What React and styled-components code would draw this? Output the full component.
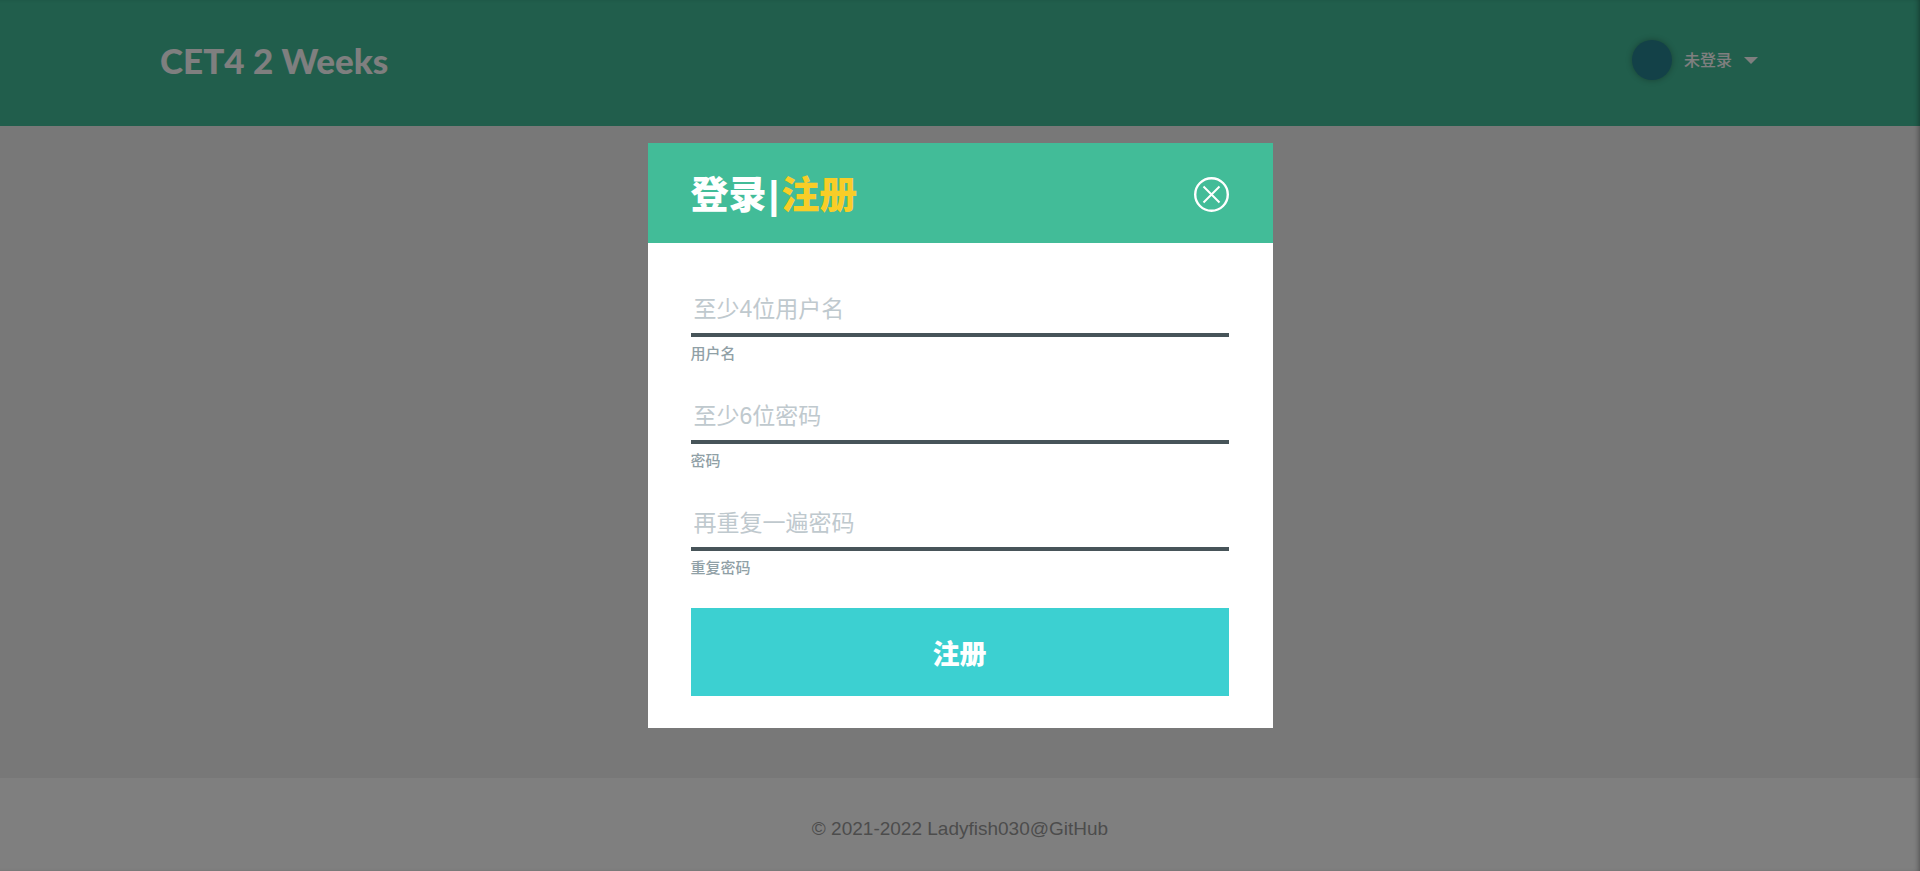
import styled, { createGlobalStyle } from 'styled-components';

const GlobalStyle = createGlobalStyle`
  *,
  *::before,
  *::after {
    box-sizing: border-box;
  }

  body {
    margin: 0;
    font-family: 'Liberation Sans', 'Noto Sans CJK SC', sans-serif;
    background-color: #f0f0f0;
  }
`;

const Page = styled.div`
  display: flex;
  flex-direction: column;
  min-height: 100vh;
`;

const Header = styled.header`
  display: flex;
  align-items: flex-start;
  justify-content: space-between;
  height: 126px;
  padding: 38px 162px 0 160px;
  background-color: #42bc98;
  color: #fff;
`;

const Brand = styled.h1`
  margin: 0;
  font-family: Lato, 'Open Sans', sans-serif;
  font-size: 35px;
  line-height: 44px;
  font-weight: 900;
`;

const UserMenu = styled.button`
  display: flex;
  align-items: center;
  gap: 12px;
  padding: 0;
  border: none;
  background: none;
  color: inherit;
  font-family: inherit;
  font-size: 16px;
  line-height: 42px;
  font-weight: 500;
  cursor: pointer;
`;

const UserName = styled.span`
  padding-top: 2px;
`;

const Avatar = styled.span`
  width: 40px;
  height: 40px;
  border-radius: 50%;
  background-color: #268291;
  box-shadow: 0 0 6px rgba(0, 0, 0, 0.3);
`;

const Caret = styled.span`
  border-top: 7px solid #fff;
  border-left: 7px solid transparent;
  border-right: 7px solid transparent;
`;

const Main = styled.main`
  flex: 1;
`;

const Footer = styled.footer`
  display: flex;
  align-items: center;
  justify-content: center;
  height: 93px;
  padding-top: 8px;
  background-color: #fff;
  color: #999;
  font-size: 19px;
`;

const Overlay = styled.div`
  position: fixed;
  inset: 0;
  display: flex;
  align-items: center;
  justify-content: center;
  background-color: rgba(0, 0, 0, 0.5);
  box-shadow: inset -4px 0 6px -4px rgba(0, 0, 0, 0.5);
`;

const Dialog = styled.section`
  width: 625px;
  max-width: 100%;
  background-color: #fff;
`;

const DialogHeader = styled.div`
  display: flex;
  align-items: center;
  justify-content: space-between;
  height: 100px;
  padding: 3px 44px 0 43px;
  background-color: #42bc98;
`;

const Tabs = styled.div`
  display: flex;
  align-items: center;
  gap: 2px;
  color: #fff;
  font-size: 38px;
  line-height: 48px;
  font-weight: 700;
`;

const Tab = styled.button`
  padding: 0;
  border: none;
  background: none;
  color: ${({ $active }) => ($active ? '#f9cd27' : '#fff')};
  font: inherit;
  font-weight: 900;
  cursor: pointer;
`;

const CloseButton = styled.button`
  display: flex;
  padding: 0;
  border: none;
  background: none;
  color: #fff;
  cursor: pointer;
`;

const Form = styled.form`
  display: flex;
  flex-direction: column;
  padding: 44px 44px 32px 43px;
`;

const Field = styled.div`
  display: flex;
  flex-direction: column;
  height: 107px;
`;

const Input = styled.input`
  width: 100%;
  height: 50px;
  padding: 0 3px 2px;
  border: none;
  border-bottom: 4px solid #475459;
  outline: none;
  background: none;
  color: #475459;
  font-family: inherit;
  font-size: 23px;

  &::placeholder {
    color: #bfc9ce;
    opacity: 1;
  }
`;

const Label = styled.label`
  margin-top: 5px;
  color: #90a0a6;
  font-size: 15px;
  line-height: 24px;
  font-weight: 500;
`;

const SubmitButton = styled.button`
  height: 88px;
  border: none;
  background-color: #3cd0d1;
  color: #fff;
  font-family: inherit;
  font-size: 27px;
  font-weight: 900;
  cursor: pointer;
`;

const fields = [
  { id: 'username', type: 'text', label: '用户名', placeholder: '至少4位用户名' },
  { id: 'password', type: 'password', label: '密码', placeholder: '至少6位密码' },
  { id: 'repeat', type: 'password', label: '重复密码', placeholder: '再重复一遍密码' },
];

const CloseIcon = () => (
  <svg width='35' height='35' viewBox='0 0 35 35' fill='none' stroke='currentColor'>
    <circle cx='17.5' cy='17.5' r='16.3' strokeWidth='2.4' />
    <path d='M9.5 9.5l16 16M25.5 9.5l-16 16' strokeWidth='2' />
  </svg>
);

const RegisterDialog = () => (
  <Overlay>
    <Dialog role='dialog' aria-modal='true' aria-label='注册'>
      <DialogHeader>
        <Tabs>
          <Tab type='button'>登录</Tab>
          <span>|</span>
          <Tab type='button' $active>
            注册
          </Tab>
        </Tabs>
        <CloseButton type='button' aria-label='关闭'>
          <CloseIcon />
        </CloseButton>
      </DialogHeader>

      <Form onSubmit={(e) => e.preventDefault()}>
        {fields.map(({ id, type, label, placeholder }) => (
          <Field key={id}>
            <Input id={id} type={type} placeholder={placeholder} />
            <Label htmlFor={id}>{label}</Label>
          </Field>
        ))}
        <SubmitButton type='submit'>注册</SubmitButton>
      </Form>
    </Dialog>
  </Overlay>
);

const App = () => (
  <>
    <GlobalStyle />
    <Page>
      <Header>
        <Brand>CET4 2 Weeks</Brand>
        <UserMenu type='button'>
          <Avatar />
          <UserName>未登录</UserName>
          <Caret />
        </UserMenu>
      </Header>
      <Main />
      <Footer>© 2021-2022 Ladyfish030@GitHub</Footer>
    </Page>
    <RegisterDialog />
  </>
);

export default App;
